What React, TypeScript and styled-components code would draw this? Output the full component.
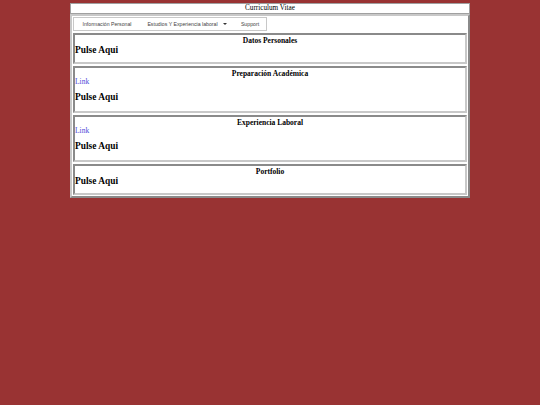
import React from 'react';
import styled, { createGlobalStyle } from 'styled-components';

const GlobalStyle = createGlobalStyle`
  html, body {
    margin: 0;
    padding: 0;
    background: #993333;
    font-family: "Liberation Serif", "Times New Roman", serif;
  }
`;

const Page = styled.div`
  width: 400px;
  margin: 3px auto 0;
`;

const TitleBar = styled.div`
  background: #fff;
  border: 1px solid #a0a0a0;
  height: 9px;
  line-height: 9px;
  font-size: 7.2px;
  text-align: center;
  color: #000;
`;

const Frame = styled.div`
  background: #fff;
  border: 2px solid;
  border-color: #c8c8c8 #8a8a8a #8a8a8a #c8c8c8;
  padding: 1px;
  display: flex;
  flex-direction: column;
  gap: 2px;
`;

const Nav = styled.ul`
  list-style: none;
  margin: 0;
  padding: 0;
  width: 192px;
  height: 12px;
  border: 1px solid #c8c8c8;
  display: flex;
  align-items: center;
  font-family: "Liberation Sans", Arial, sans-serif;
  font-size: 5.2px;
  color: #444;
`;

const NavItem = styled.li<{ $w: number }>`
  width: ${(p) => p.$w}px;
  text-align: center;
  display: flex;
  justify-content: center;
  align-items: center;
  gap: 5px;
`;

const Caret = styled.span`
  width: 0;
  height: 0;
  border-left: 2px solid transparent;
  border-right: 2px solid transparent;
  border-top: 2.5px solid #333;
`;

const Section = styled.section<{ $h: number }>`
  height: ${(p) => p.$h}px;
  border: 2px solid;
  border-color: #8a8a8a #c8c8c8 #c8c8c8 #8a8a8a;
  padding: 0;
  display: flex;
  flex-direction: column;
`;

const SectionTitle = styled.div`
  font-weight: bold;
  font-size: 7.5px;
  text-align: center;
  margin-top: 1px;
  line-height: 9px;
`;

const SectionLink = styled.a`
  font-size: 7.5px;
  color: #4a4ad8;
  text-decoration: none;
  line-height: 8px;
`;

const Pulse = styled.h3<{ $top: number }>`
  margin: ${(p) => p.$top}px 0 0;
  font-size: 9.4px;
  font-weight: bold;
  line-height: 11px;
`;

const sections = [
  { title: 'Datos Personales', link: false, h: 27, top: 0 },
  { title: 'Preparación Académica', link: true, h: 43, top: 6 },
  { title: 'Experiencia Laboral', link: true, h: 43, top: 6 },
  { title: 'Portfolio', link: false, h: 27, top: 0 },
];

export default function App() {
  return (
    <>
      <GlobalStyle />
      <Page>
        <TitleBar>Curriculum Vitae</TitleBar>
        <Frame>
          <Nav>
            <NavItem $w={66}>Información Personal</NavItem>
            <NavItem $w={94}>
              Estudios Y Experiencia laboral <Caret />
            </NavItem>
            <NavItem $w={32}>Support</NavItem>
          </Nav>
          {sections.map((s) => (
            <Section key={s.title} $h={s.h}>
              <SectionTitle>{s.title}</SectionTitle>
              {s.link && <SectionLink href="#">Link</SectionLink>}
              <Pulse $top={s.top}>Pulse Aqui</Pulse>
            </Section>
          ))}
        </Frame>
      </Page>
    </>
  );
}
